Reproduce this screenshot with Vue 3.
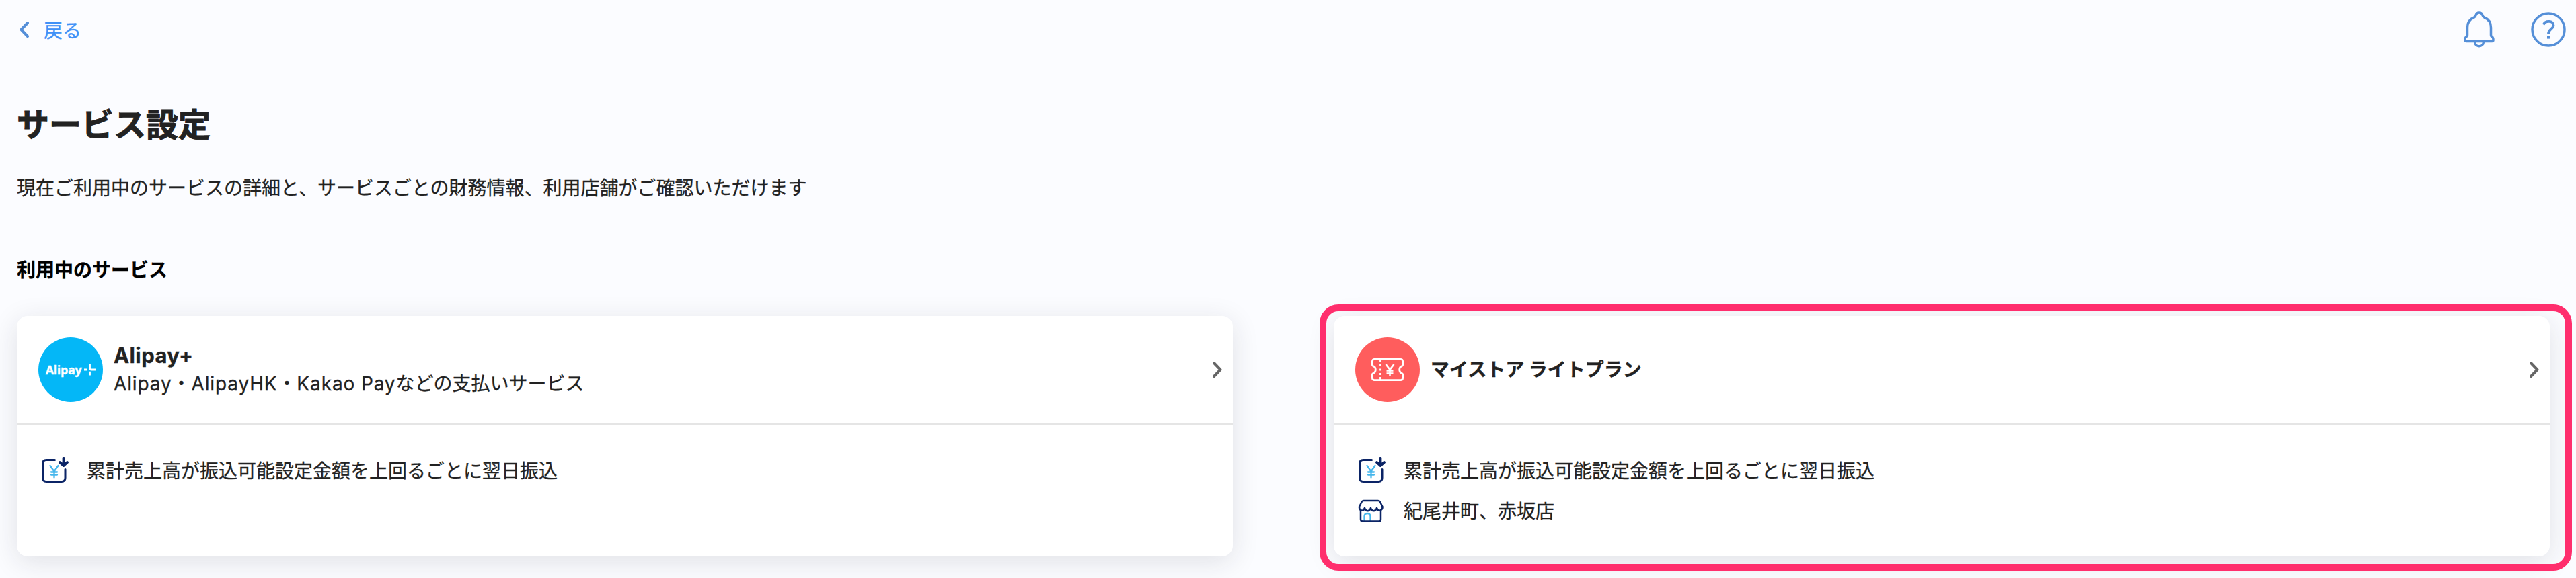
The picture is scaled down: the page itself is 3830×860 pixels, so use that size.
<script setup>
import { ref } from "vue";

const services = ref([
  {
    id: "alipay",
    name: "Alipay+",
    brands: "Alipay・AlipayHK・Kakao Pay",
    description: "などの支払いサービス",
    payout: "累計売上高が振込可能設定金額を上回るごとに翌日振込",
    stores: "",
    isHighlighted: false,
  },
  {
    id: "mystore",
    name: "マイストア ライトプラン",
    brands: "",
    description: "",
    payout: "累計売上高が振込可能設定金額を上回るごとに翌日振込",
    stores: "紀尾井町、赤坂店",
    isHighlighted: true,
  },
]);
</script>

<template>
  <div class="page">
    <header class="topbar">
      <a class="back">
        <svg class="back-icon" viewBox="0 0 14 24">
          <path d="M12 2 L2.5 12 L12 22" />
        </svg>
        <span>戻る</span>
      </a>
      <div class="topbar-actions">
        <svg class="bell-icon" viewBox="0 0 46 54">
          <path
            d="M15.5 9 C17 8.5 17.5 7.5 18 6 C19.5 0.7 26.5 0.7 28 6 C28.5 7.5 29 8.5 30.5 9 C37 11.5 40.5 17 40.5 24 V35 C40.5 36.5 41 37.2 42 37.5 C44 38.5 44 40 44 42.5 C44 44 43.5 44.5 42 44.5 H4 C2.5 44.5 2 44 2 42.5 C2 40 2 38.5 4 37.5 C5 37.2 5.5 36.5 5.5 35 V24 C5.5 17 9 11.5 15.5 9 Z"
          />
          <path d="M16.5 45 C16.5 54 29.5 54 29.5 45" />
        </svg>
        <svg class="help-icon" viewBox="0 0 52 52">
          <circle cx="26" cy="26" r="24" />
          <path d="M18.7 18.5 C21.5 12 33.5 12.5 33.5 19.5 C33.5 25 26 25.5 26 32" />
          <rect x="24" y="35.2" width="4.4" height="4.4" />
        </svg>
      </div>
    </header>

    <main>
      <h1>サービス設定</h1>
      <p class="lead">
        現在ご利用中のサービスの詳細と、サービスごとの財務情報、利用店舗がご確認いただけます
      </p>
      <h2>利用中のサービス</h2>

      <div class="service-list">
        <section
          v-for="service in services"
          :key="service.id"
          class="service-card"
          :class="{ 'is-highlighted': service.isHighlighted }"
        >
          <div class="card-head">
            <div v-if="service.id === 'alipay'" class="logo logo-alipay">
              <span>Alipay</span>
              <svg class="plus-icon" viewBox="0 0 18 18">
                <path d="M0 9 H5 M9 0 V7 Q9 9 11 9 H18 M9 12 V18" />
              </svg>
            </div>
            <div v-else class="logo logo-mystore">
              <svg class="ticket-icon" viewBox="0 0 48 34">
                <path
                  class="ticket-line"
                  d="M4.5 1.4 H43.5 Q46.6 1.4 46.6 4.5 V10 Q46.6 11 45.5 11.5 A5.9 5.9 0 0 0 45.5 22.5 Q46.6 23 46.6 24 V29.5 Q46.6 32.6 43.5 32.6 H4.5 Q1.4 32.6 1.4 29.5 V24 Q1.4 23 2.5 22.5 A5.9 5.9 0 0 0 2.5 11.5 Q1.4 11 1.4 10 V4.5 Q1.4 1.4 4.5 1.4 Z"
                />
                <path class="ticket-line" d="M13.5 2 V6 M13.5 9 V12 M13.5 15.5 V18.5 M13.5 22 V25 M13.5 28 V32" />
                <path class="ticket-yen" d="M21.5 9 L27.5 17 L33.5 9 M27.5 17 V26 M22.5 18.5 H32.5 M22.5 22.5 H32.5" />
              </svg>
            </div>
            <div class="card-title">
              <h3 :class="{ 'is-latin': service.brands }">{{ service.name }}</h3>
              <p v-if="service.description">
                <span class="brands">{{ service.brands }}</span>{{ service.description }}
              </p>
            </div>
            <svg class="arrow-icon" viewBox="0 0 14 24">
              <path d="M2 2 L11.5 12 L2 22" />
            </svg>
          </div>

          <ul class="card-body">
            <li>
              <svg class="item-icon" viewBox="0 0 42 40">
                <g class="navy">
                  <path d="M20.5 4.5 H8 Q2.5 4.5 2.5 10 V31 Q2.5 36.5 8 36.5 H30.5 Q36 36.5 36 31 V18.5" />
                  <path class="thick" d="M33.5 1.8 V12.5 M28 8 L33.5 13 L39 8" />
                </g>
                <path class="sky" d="M13.5 13 L19.5 21.5 L25.5 13 M19.500 21.5 V30.5 M15 22.500 H24 M15 26.5 H24" />
              </svg>
              <span>{{ service.payout }}</span>
            </li>
            <li v-if="service.stores">
              <svg class="item-icon" viewBox="0 0 42 40">
                <path class="sky" d="M9.5 35 V28.5 Q9.5 24 14 24 Q18.5 24 18.5 28.5 V35" />
                <g class="navy thin">
                  <path
                    d="M8.500 5 H30 Q32 5 33 7 L36.5 14 C37 20 30 22 28 16 C26 21.5 21 21.5 19 16 C17 21.5 12 21.5 10 16 C8 22 1.500 20 2 14 L5.500 7 Q6.500 5 8.500 5 Z"
                  />
                  <path d="M4 20 V32.5 Q4 35.5 7 35.5 H31 Q34 35.5 34 32.5 V20" />
                </g>
              </svg>
              <span>{{ service.stores }}</span>
            </li>
          </ul>
        </section>
      </div>
    </main>
  </div>
</template>

<style>
body {
  background-color: #fbfcff;
}
</style>

<style scoped>
h1,
h2,
h3,
p,
ul {
  margin: 0;
  padding: 0;
}

svg {
  display: block;
  flex: none;
  fill: none;
  stroke-linecap: round;
  stroke-linejoin: round;
}

.page {
  box-sizing: border-box;
  height: 860px;
  overflow: hidden;
  background-color: #fbfcff;
  color: #222;
  font-family: Inter, "Noto Sans CJK JP", sans-serif;
  font-size: 28px;
  -webkit-text-stroke: 0.3px;
}

.topbar {
  display: flex;
  align-items: center;
  justify-content: space-between;
  height: 88px;
  padding: 0 15px 0 29px;
}

.back {
  display: flex;
  align-items: center;
  gap: 22px;
  color: #4091f7;
}

.back-icon {
  width: 14px;
  height: 24px;
  stroke: #558fd8;
  stroke-width: 4;
}

.topbar-actions {
  display: flex;
  align-items: center;
  gap: 54px;
  stroke: #558fd8;
  stroke-width: 3.5;
}

.bell-icon {
  width: 46px;
  height: 54px;
}

.help-icon {
  width: 52px;
  height: 52px;
  stroke-linecap: butt;
}

.help-icon path {
  stroke-width: 3.8;
}

.help-icon rect {
  fill: #558fd8;
  stroke: none;
}

main {
  padding: 62px 39px 0 25px;
}

h1 {
  font-size: 48px;
  line-height: 72px;
  -webkit-text-stroke: 1px;
}

.lead {
  margin-top: 37px;
  line-height: 42px;
}

h2 {
  margin-top: 80px;
  color: #000;
  font-size: 28px;
  line-height: 42px;
}

.service-list {
  display: grid;
  grid-template-columns: 1fr 1fr;
  gap: 150px;
  margin-top: 47px;
}

.service-card {
  height: 358px;
  border-radius: 16px;
  background-color: white;
  box-shadow: 0 8px 40px rgba(34, 34, 50, 0.12);
}

.is-highlighted {
  position: relative;
}

.is-highlighted::after {
  content: "";
  position: absolute;
  inset: -17px -33px -21px -21px;
  border: 10px solid #ff2e6d;
  border-radius: 28px;
}

.card-head {
  display: flex;
  align-items: center;
  box-sizing: border-box;
  height: 162px;
  padding: 0 16px 0 32px;
  border-bottom: 2px solid #e5e5e5;
}

.logo {
  display: flex;
  align-items: center;
  justify-content: center;
  flex: none;
  width: 96px;
  height: 96px;
  border-radius: 50%;
}

.logo-alipay {
  gap: 4px;
  background-color: #04b7f7;
  color: white;
  font-family: "Open Sans", sans-serif;
  font-size: 18px;
  font-weight: 700;
  letter-spacing: -0.4px;
}

.plus-icon {
  width: 17px;
  height: 18px;
  stroke: white;
  stroke-width: 3;
  stroke-linecap: butt;
}

.logo-mystore {
  background-color: #ff5d5d;
}

.ticket-icon {
  width: 48px;
  height: 34px;
}

.ticket-line {
  stroke: white;
  stroke-width: 2.8;
  stroke-linecap: butt;
}

.ticket-yen {
  stroke: white;
  stroke-width: 2.5;
  stroke-linecap: butt;
}

.card-title {
  flex: 1;
  padding-left: 16px;
  line-height: 42px;
}

h3 {
  font-size: 28px;
  line-height: 42px;
}

.is-latin {
  font-size: 31px;
  letter-spacing: 0.4px;
}

.brands {
  letter-spacing: 0.87px;
}

.arrow-icon {
  width: 14px;
  height: 24px;
  stroke: #666;
  stroke-width: 4;
}

.card-body {
  display: flex;
  flex-direction: column;
  gap: 18px;
  padding: 47px 36px 0;
  list-style: none;
}

.card-body li {
  display: flex;
  align-items: center;
  gap: 26px;
  line-height: 42px;
}

.card-body span {
  padding-top: 2px;
  line-height: 40px;
}

.item-icon {
  width: 42px;
  height: 40px;
}

.navy {
  stroke: #0b2466;
  stroke-width: 3;
}

.navy.thin {
  stroke-width: 2.5;
}

.navy .thick {
  stroke-width: 3.8;
}

.sky {
  stroke: #45b6ec;
  stroke-width: 2.3;
}
</style>
